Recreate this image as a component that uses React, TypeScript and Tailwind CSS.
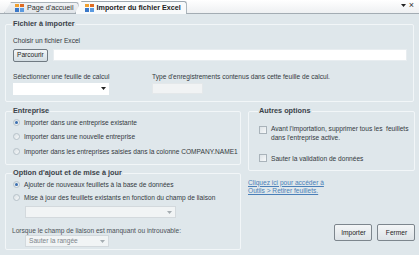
import React from 'react'

function TabIcon() {
  return (
    <svg width="9" height="8" viewBox="0 0 9 8" className="flex-shrink-0">
      <rect x="0" y="0" width="4" height="3" fill="#f0a030" />
      <rect x="5" y="0" width="4" height="3" fill="#e06a20" />
      <rect x="0" y="4" width="4" height="4" fill="#3a78c8" />
      <rect x="5" y="4" width="4" height="4" fill="#5a9ae0" />
    </svg>
  )
}

function Radio({ checked }: { checked?: boolean }) {
  return (
    <span className="w-[7px] h-[7px] rounded-full border border-[#b7c2c9] bg-gradient-to-br from-[#d9e0e4] to-[#f6f8f9] flex items-center justify-center flex-shrink-0">
      {checked && <span className="w-[3px] h-[3px] rounded-full bg-[#3a6fb0]" />}
    </span>
  )
}

function Check() {
  return <span className="block w-[8px] h-[8px] border border-[#a9b3ba] bg-gradient-to-br from-[#dde3e7] to-[#f7f9fa] flex-shrink-0" />
}

function Caret({ light }: { light?: boolean }) {
  return (
    <svg width="5" height="3" viewBox="0 0 5 3">
      <path d="M0 0h5L2.5 3z" fill={light ? '#a6adb2' : '#222'} />
    </svg>
  )
}

function Group({ title, className, children }: { title: string; className?: string; children: React.ReactNode }) {
  return (
    <fieldset className={`border border-[#f2f6f8] rounded-[2px] pl-[7px] pr-[6px] min-w-0 ${className ?? ''}`}>
      <legend className="px-[1px] -ml-[1px] text-[7.3px] font-bold text-[#3b4249] leading-[10px]">{title}</legend>
      {children}
    </fieldset>
  )
}

export default function App() {
  return (
    <div
      className="w-[419px] h-[255px] bg-[#dfe7eb] overflow-hidden flex flex-col text-[#33393e]"
      style={{ fontFamily: '"Liberation Sans", Arial, sans-serif' }}
    >
      {/* Tab strip */}
      <div className="h-[14px] flex items-end bg-gradient-to-b from-[#ffffff] to-[#eef0f2] border-b border-[#a3acb3]">
        <div className="ml-[4px] h-[11px] flex-shrink-0 flex items-center gap-[3px] pl-[10px] pr-[4px] bg-gradient-to-b from-[#f1f3f5] to-[#dfe4e8] border border-b-0 border-[#aab3ba] rounded-tr-[3px] [clip-path:polygon(7px_0,100%_0,100%_100%,0_100%)] text-[7.2px] text-[#333]">
          <TabIcon />
          <span className="leading-none whitespace-nowrap">Page d'accueil</span>
        </div>
        <div className="-ml-[4px] h-[13px] -mb-[1px] flex-shrink-0 flex items-center gap-[3px] pl-[9px] pr-[5px] bg-[#f8fafb] border border-b-0 border-[#9ea8b0] rounded-tr-[3px] [clip-path:polygon(7px_0,100%_0,100%_100%,0_100%)] text-[7.2px] font-bold text-[#222]">
          <TabIcon />
          <span className="leading-none whitespace-nowrap">Importer du fichier Excel</span>
        </div>
        <div className="ml-auto mr-[5px] mb-[3px] flex items-center gap-[3px] text-[9px] text-[#333] leading-none">
          <Caret />
          <span>×</span>
        </div>
      </div>

      <div className="flex-1 flex flex-col px-[5px] pt-[5px]">
        <Group title="Fichier à importer" className="h-[83px]">
          <div className="text-[6.6px] mt-[6.5px] leading-[9px]">Choisir un fichier Excel</div>
          <div className="flex items-center gap-[5px] mt-[4px]">
            <button className="h-[13px] px-[3px] border border-[#707a82] rounded-[2px] bg-gradient-to-b from-[#f3f6f8] to-[#d3dde3] text-[6.6px] leading-none text-[#222]">
              Parcourir
            </button>
            <div className="flex-1 h-[12px] bg-white border border-[#e8edf0]" />
          </div>
          <div className="flex mt-[10px]">
            <div className="w-[96px]">
              <div className="text-[6.6px] leading-[9px] whitespace-nowrap">Sélectionner une feuille de calcul</div>
              <div className="mt-[2px] h-[12px] bg-white flex items-center justify-end pr-[3px]">
                <Caret />
              </div>
            </div>
            <div className="ml-[43px]">
              <div className="text-[6.6px] leading-[9px] whitespace-nowrap">Type d'enregistrements contenus dans cette feuille de calcul.</div>
              <div className="mt-[2px] w-[51px] h-[11px] bg-[#f1f3f4] border border-[#e4e8ea]" />
            </div>
          </div>
        </Group>

        <div className="flex gap-[7px] mt-[4px]">
          <div className="w-[236px] flex flex-col">
            <Group title="Entreprise" className="h-[59px]">
              <div className="flex flex-col gap-[5.5px] mt-[1.5px] text-[6.6px] leading-[9px]">
                <div className="flex items-center gap-[4px]"><Radio checked />Importer dans une entreprise existante</div>
                <div className="flex items-center gap-[4px]"><Radio />Importer dans une nouvelle entreprise</div>
                <div className="flex items-center gap-[4px] whitespace-nowrap"><Radio />Importer dans les entreprises saisies dans la colonne COMPANY.NAME1</div>
              </div>
            </Group>
            <Group title="Option d'ajout et de mise à jour" className="mt-[3px] h-[82px]">
              <div className="flex flex-col gap-[4px] mt-[1.5px] text-[6.6px] leading-[9px]">
                <div className="flex items-center gap-[4px]"><Radio checked />Ajouter de nouveaux feuillets à la base de données</div>
                <div className="flex items-center gap-[4px] whitespace-nowrap"><Radio />Mise à jour des feuillets existants en fonction du champ de liaison</div>
              </div>
              <div className="ml-[12px] mt-[4.5px] w-[151px] h-[12px] bg-[#f1f4f5] border border-[#d3d9dd] flex items-center justify-end pr-[3px]">
                <Caret light />
              </div>
              <div className="text-[6.6px] leading-[9px] text-[#4a5157] mt-[8px] -ml-[1px]">Lorsque le champ de liaison est manquant ou introuvable:</div>
              <div className="ml-[12px] w-[84px] h-[12px] bg-[#f1f4f5] border border-[#d3d9dd] flex items-center justify-between px-[3px] text-[6.6px] text-[#7d858b]">
                <span>Sauter la rangée</span>
                <Caret light />
              </div>
            </Group>
          </div>

          <div className="flex-1 flex flex-col">
            <Group title="Autres options" className="h-[65px] !pl-[10px]">
              <div className="flex items-start gap-[2px] mt-[7.5px] text-[6.6px] leading-[9px] whitespace-nowrap">
                <span className="mt-[2px] mr-[2px]"><Check /></span>
                <span>Avant l'importation, supprimer tous les&nbsp; feuillets<br />dans l'entreprise active.</span>
              </div>
              <div className="flex items-center gap-[4px] mt-[12px] text-[6.6px] leading-[9px]">
                <Check />
                <span>Sauter la validation de données</span>
              </div>
            </Group>
            <div className="mt-[7.5px] text-[6.6px] leading-[8.5px] text-[#4a7fb8] underline">
              Cliquez ici pour accéder à<br />Outils &gt; Retirer feuillets.
            </div>
            <div className="mt-auto mb-[9px] flex justify-end gap-[5px]">
              <button className="w-[38px] h-[17px] border border-[#7d868d] rounded-[2px] bg-gradient-to-b from-[#f4f6f7] to-[#dde3e7] text-[6.6px] text-[#222]">Importer</button>
              <button className="w-[38px] h-[17px] border border-[#7d868d] rounded-[2px] bg-gradient-to-b from-[#f4f6f7] to-[#dde3e7] text-[6.6px] text-[#222]">Fermer</button>
            </div>
          </div>
        </div>
      </div>
    </div>
  )
}
